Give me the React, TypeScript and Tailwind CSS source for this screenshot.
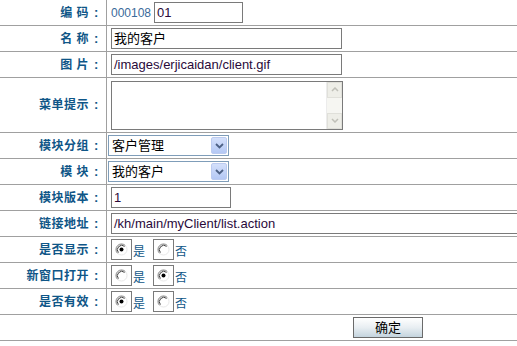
import React from 'react';

const labelCls =
  'w-[107px] shrink-0 border-r border-[#a0a0a0] flex items-center justify-end pr-[5px] text-[12px] font-bold text-[#0f5687]';

const Row: React.FC<{ label: string; h?: string; children: React.ReactNode }> = ({ label, h = 'h-[26px]', children }) => (
  <div className={`flex ${h} border-b border-[#a0a0a0]`}>
    <div className={labelCls}>
      <span className="tracking-[0.5px]">{label}</span>
      <span className="w-[12px] pl-[5px] text-[13px] font-extrabold">:</span>
    </div>
    <div className="flex-1 flex items-center pl-[4px]">{children}</div>
  </div>
);

const TextInput: React.FC<{ value: string; w: string; color?: string }> = ({ value, w, color = 'text-[#2a0a3a]' }) => (
  <div
    className={`${w} h-[21px] border border-[#7a7a7a] bg-white flex items-center pl-[2px] text-[13px] leading-none ${color} whitespace-nowrap overflow-hidden`}
  >
    {value}
  </div>
);

const Select: React.FC<{ value: string }> = ({ value }) => (
  <div className="w-[121px] h-[21px] -ml-[3px] border border-[#7f9db9] bg-white flex items-center justify-between pl-[3px] pr-[1px]">
    <span className="text-[13px] text-black">{value}</span>
    <div className="w-[16px] h-[17px] bg-gradient-to-b from-[#d4e0fb] to-[#b4c8f4] border border-[#bccbf0] rounded-[2px] flex items-center justify-center">
      <svg width="9" height="6" viewBox="0 0 9 6">
        <path d="M1 1 L4.5 4.5 L8 1" fill="none" stroke="#4d6185" strokeWidth="1.8" />
      </svg>
    </div>
  </div>
);

const Radio: React.FC<{ checked: boolean }> = ({ checked }) => (
  <div className="w-[21px] h-[21px] border border-[#7a7a7a] flex items-center justify-center">
    <svg width="13" height="13" viewBox="0 0 13 13">
      <circle cx="6.5" cy="6.5" r="5.5" fill="#fff" />
      <path d="M2.6 10.4 A5.5 5.5 0 0 1 10.4 2.6" fill="none" stroke="#808080" strokeWidth="1" />
      <path d="M3.4 9.6 A4.4 4.4 0 0 1 9.6 3.4" fill="none" stroke="#404040" strokeWidth="1" />
      <path d="M10.4 2.6 A5.5 5.5 0 0 1 2.6 10.4" fill="none" stroke="#e8e8e8" strokeWidth="1" />
      {checked && <circle cx="6.5" cy="6.5" r="2" fill="#000" />}
    </svg>
  </div>
);

const RadioPair: React.FC<{ yes: boolean }> = ({ yes }) => (
  <div className="flex items-center text-[12px] text-[#0f5687]">
    <Radio checked={yes} />
    <span className="ml-px mt-[4px] mr-[8px]">是</span>
    <Radio checked={!yes} />
    <span className="ml-px mt-[4px]">否</span>
  </div>
);

export default function App() {
  return (
    <div className="w-[517px] h-[346px] overflow-hidden bg-white" style={{ fontFamily: '"Liberation Sans", "Noto Sans CJK SC", sans-serif' }}>
      <div className="w-[776px]">
        <Row label="编 码">
          <span className="text-[12px] text-[#3a6a9a] mr-[3px]">000108</span>
          <TextInput value="01" w="w-[89px]" />
        </Row>
        <Row label="名 称">
          <TextInput value="我的客户" w="w-[231px]" color="text-black" />
        </Row>
        <Row label="图 片">
          <TextInput value="/images/erjicaidan/client.gif" w="w-[231px]" />
        </Row>
        <Row label="菜单提示" h="h-[55px]">
          <div className="w-[232px] h-[49px] border border-[#7a7a7a] bg-white flex justify-end">
            <div className="w-[16px] h-full bg-[#f6f6f2] border-l border-[#ececec] flex flex-col justify-between">
              <div className="h-[16px] bg-[#eeeee8] border border-[#e0e0da] flex items-center justify-center">
                <svg width="8" height="5" viewBox="0 0 8 5">
                  <path d="M1 4 L4 1 L7 4" fill="none" stroke="#c0c0b8" strokeWidth="1.5" />
                </svg>
              </div>
              <div className="h-[16px] bg-[#eeeee8] border border-[#e0e0da] flex items-center justify-center">
                <svg width="8" height="5" viewBox="0 0 8 5">
                  <path d="M1 1 L4 4 L7 1" fill="none" stroke="#c0c0b8" strokeWidth="1.5" />
                </svg>
              </div>
            </div>
          </div>
        </Row>
        <Row label="模块分组">
          <Select value="客户管理" />
        </Row>
        <Row label="模 块">
          <Select value="我的客户" />
        </Row>
        <Row label="模块版本">
          <TextInput value="1" w="w-[120px]" />
        </Row>
        <Row label="链接地址">
          <TextInput value="/kh/main/myClient/list.action" w="w-[460px]" />
        </Row>
        <Row label="是否显示">
          <RadioPair yes />
        </Row>
        <Row label="新窗口打开">
          <RadioPair yes={false} />
        </Row>
        <Row label="是否有效">
          <RadioPair yes />
        </Row>
        <div className="h-[26px] border-b border-[#a0a0a0] flex items-center justify-center">
          <button className="w-[70px] h-[21px] border border-[#6a6a6a] bg-gradient-to-b from-[#ffffff] via-[#e8eef2] to-[#c4d4de] text-[13px] text-black leading-none">
            确定
          </button>
        </div>
      </div>
    </div>
  );
}
